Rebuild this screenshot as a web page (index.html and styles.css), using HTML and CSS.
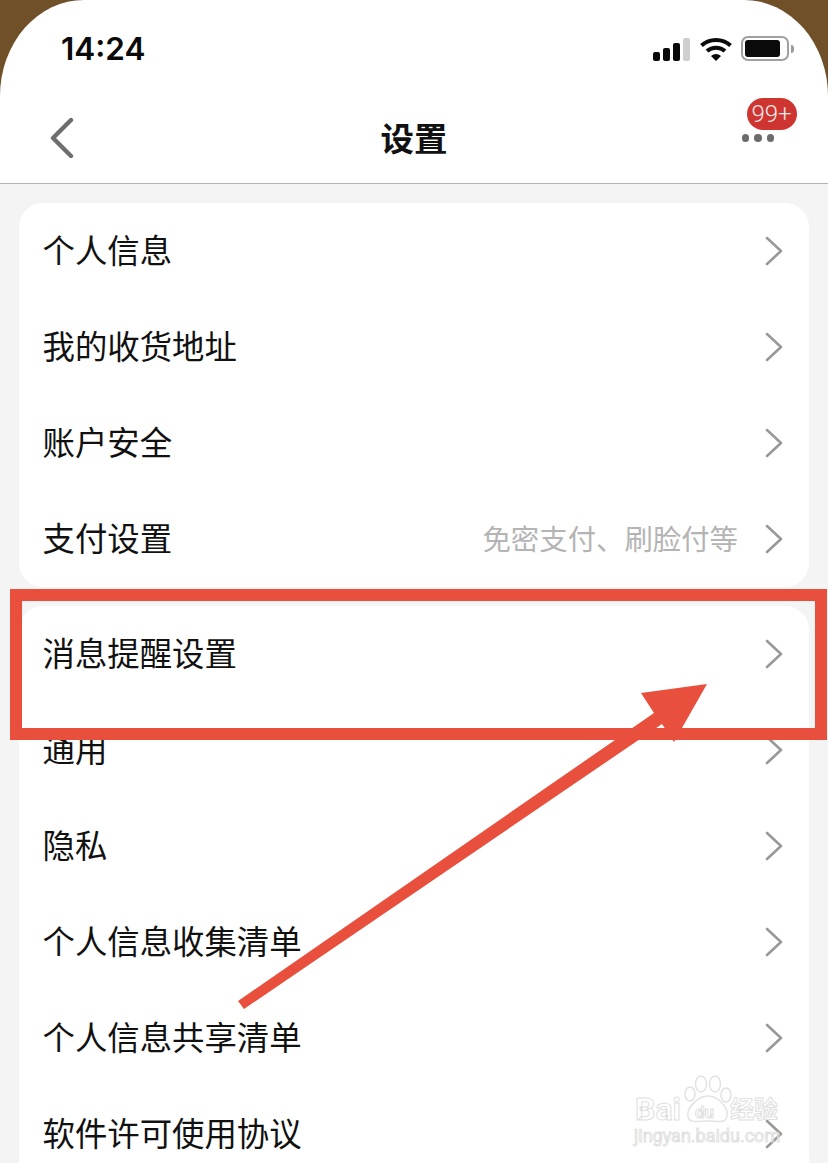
FILE: index.html
```html
<!DOCTYPE html>
<html lang="zh-CN">
<head>
<meta charset="utf-8">
<title>设置</title>
<link rel="stylesheet" href="styles.css">
</head>
<body>
<svg class="defs" width="0" height="0" aria-hidden="true">
  <symbol id="chev" viewBox="0 0 18 30"><path d="M2 2 L16 15 L2 28" fill="none" stroke="#999" stroke-width="2.6" stroke-linecap="round" stroke-linejoin="round"/></symbol>
</svg>
<div class="page">
  <header class="top">
    <div class="status">
      <span class="time">14:24</span>
      <div class="status-icons">
        <div class="signal"><i class="b1"></i><i class="b2"></i><i class="b3"></i><i class="b4"></i></div>
        <svg class="wifi" width="32" height="24" viewBox="0 0 32 24">
          <path d="M1.5 8.5 C9.5 1 22.5 1 30.5 8.5" fill="none" stroke="#0a0a0a" stroke-width="4"/>
          <path d="M7 14 C12 9.6 20 9.6 25 14" fill="none" stroke="#0a0a0a" stroke-width="4"/>
          <path d="M11 19 L16 24 L21 19 C18 16.2 14 16.2 11 19 Z" fill="#0a0a0a"/>
        </svg>
        <div class="battery"><div class="battery-body"><div class="battery-fill"></div></div><div class="battery-nub"></div></div>
      </div>
    </div>
    <nav class="nav">
      <svg class="back" width="28" height="42" viewBox="0 0 28 42"><path d="M23 3 L5 21 L23 39" fill="none" stroke="#6e6e6e" stroke-width="4.4" stroke-linecap="round" stroke-linejoin="round"/></svg>
      <h1 class="title">设置</h1>
      <div class="more"><i></i><i></i><i></i><span class="badge">99+</span></div>
    </nav>
  </header>
  <main class="content">
    <section class="card">
      <div class="row"><span class="label">个人信息</span><svg class="chevron"><use href="#chev"/></svg></div>
      <div class="row"><span class="label">我的收货地址</span><svg class="chevron"><use href="#chev"/></svg></div>
      <div class="row"><span class="label">账户安全</span><svg class="chevron"><use href="#chev"/></svg></div>
      <div class="row"><span class="label">支付设置</span><span class="sub">免密支付、刷脸付等</span><svg class="chevron"><use href="#chev"/></svg></div>
    </section>
    <section class="card">
      <div class="row"><span class="label">消息提醒设置</span><svg class="chevron"><use href="#chev"/></svg></div>
      <div class="row"><span class="label">通用</span><svg class="chevron"><use href="#chev"/></svg></div>
      <div class="row"><span class="label">隐私</span><svg class="chevron"><use href="#chev"/></svg></div>
      <div class="row"><span class="label">个人信息收集清单</span><svg class="chevron"><use href="#chev"/></svg></div>
      <div class="row"><span class="label">个人信息共享清单</span><svg class="chevron"><use href="#chev"/></svg></div>
      <div class="row"><span class="label">软件许可使用协议</span><svg class="chevron"><use href="#chev"/></svg></div>
    </section>
  </main>
  <svg class="markup" width="828" height="1163" viewBox="0 0 828 1163" aria-hidden="true">
    <rect x="16" y="595" width="805" height="139" fill="none" stroke="#e94f3d" stroke-width="12"/>
    <polygon points="238,1001 654,713 641,693 707,684 674,742 662,724 244,1009" fill="#e94f3d"/>
  </svg>
  <svg class="watermark" width="828" height="1163" viewBox="0 0 828 1163" aria-hidden="true">
    <g class="wm-paw">
      <ellipse cx="701" cy="1084" rx="5.5" ry="8"/>
      <ellipse cx="715" cy="1084" rx="5.5" ry="8"/>
      <ellipse cx="690" cy="1094" rx="5" ry="7"/>
      <ellipse cx="726" cy="1095" rx="5" ry="7"/>
      <path d="M708 1096 C698 1096 686 1108 688 1117 C690 1124 700 1121 708 1121 C716 1121 726 1124 727 1116 C729 1108 718 1096 708 1096 Z"/>
    </g>
    <text class="wm-bai" x="635" y="1120">Bai</text>
    <text class="wm-du" x="695" y="1118">du</text>
    <text class="wm-cn" x="730" y="1118">经验</text>
    <text class="wm-url" x="634" y="1142">jingyan.baidu.com</text>
  </svg>
</div>
</body>
</html>
```
FILE: styles.css
```css
* { box-sizing: border-box; }
html, body { margin: 0; padding: 0; }
body {
  width: 828px;
  height: 1163px;
  overflow: hidden;
  font-family: "Noto Sans CJK SC", "Noto Sans", sans-serif;
  background: #f4f4f4;
}
.defs { display: block; height: 0; }
.page {
  position: relative;
  width: 828px;
  height: 1163px;
  overflow: hidden;
  background: #f4f4f4;
}
.top {
  height: 184px;
  background: linear-gradient(#6f5029 0 100px, transparent 100px);
  display: flex;
  flex-direction: column;
}
.status {
  height: 96px;
  background: #fff;
  border-radius: 84px 84px 0 0 / 96px 96px 0 0;
  display: flex;
  align-items: flex-start;
  justify-content: space-between;
  padding: 29px 34px 0 61px;
}
.time {
  font-family: Inter, Roboto, sans-serif;
  font-size: 31.5px;
  font-weight: 600;
  line-height: 40px;
  color: #0a0a0a;
}
.status-icons {
  display: flex;
  align-items: flex-end;
  padding-top: 7px;
}
.signal {
  display: flex;
  align-items: flex-end;
  gap: 3px;
  height: 24px;
}
.signal i { display: block; width: 7px; border-radius: 2px; background: #0a0a0a; }
.signal .b1 { height: 9px; }
.signal .b2 { height: 13px; }
.signal .b3 { height: 18px; }
.signal .b4 { height: 23px; background: #cfcfcf; }
.wifi { margin-left: 10px; display: block; }
.battery { display: flex; align-items: center; margin-left: 9px; height: 25px; }
.battery-body {
  width: 48px;
  height: 25px;
  border: 2px solid #a0a0a0;
  border-radius: 7px;
  padding: 2px;
  background: #fff;
}
.battery-fill { width: 35px; height: 17px; background: #0a0a0a; border-radius: 3px; }
.battery-nub { width: 3px; height: 8px; margin-left: 2px; background: #9a9a9a; border-radius: 0 3px 3px 0; }
.nav {
  flex: 1;
  background: #fff;
  border-bottom: 1px solid #b3b3b3;
  display: flex;
  align-items: center;
  justify-content: space-between;
  padding: 0 31px 0 49px;
  position: relative;
}
.back { display: block; margin-top: -3px; margin-left: -1px; }
.title {
  position: absolute;
  left: 0;
  right: 0;
  top: 0;
  margin: 0;
  text-align: center;
  font-size: 33.5px;
  font-weight: 700;
  line-height: 82px;
  color: #111;
}
.more {
  position: relative;
  display: flex;
  gap: 5px;
  margin-top: -3px;
  margin-right: 23px;
  width: auto;
}
.more i { display: block; width: 7.5px; height: 7.5px; border-radius: 50%; background: #6c6c6c; }
.badge {
  position: absolute;
  left: 5px;
  top: -36px;
  width: 50px;
  height: 32px;
  border-radius: 16px;
  background: #cf3530;
  color: #f5eaea;
  font-family: Roboto, sans-serif;
  font-size: 24px;
  font-weight: 300;
  line-height: 32px;
  text-align: center;
}
.content {
  padding: 19px 19px 0;
  display: flex;
  flex-direction: column;
  gap: 19px;
}
.card {
  background: #fff;
  border-radius: 24px;
}
.row {
  height: 96px;
  display: flex;
  align-items: center;
  padding: 0 26px 0 23.5px;
}
.label {
  flex: 1;
  font-size: 32.4px;
  line-height: 44px;
  padding-bottom: 4px;
  color: #111;
  white-space: nowrap;
}
.sub {
  font-size: 28.4px;
  line-height: 40px;
  padding-bottom: 3px;
  color: #b4b4b4;
  margin-right: 27px;
  white-space: nowrap;
}
.chevron { display: block; width: 18px; height: 30px; flex: none; }
.markup, .watermark { position: absolute; left: 0; top: 0; pointer-events: none; }
.wm-paw ellipse, .wm-paw path { fill: none; stroke: #e2e2e2; stroke-width: 1.5; }
.watermark text { fill: none; stroke: #dfdfdf; stroke-width: 1; }
.wm-bai { font-family: Roboto, sans-serif; font-size: 32px; font-weight: 700; }
.wm-du { font-family: Roboto, sans-serif; font-size: 17px; font-weight: 700; }
.wm-cn { font-family: "Noto Sans CJK SC", sans-serif; font-size: 24px; font-weight: 700; }
.wm-url { font-family: Roboto, sans-serif; font-size: 18px; }
```
